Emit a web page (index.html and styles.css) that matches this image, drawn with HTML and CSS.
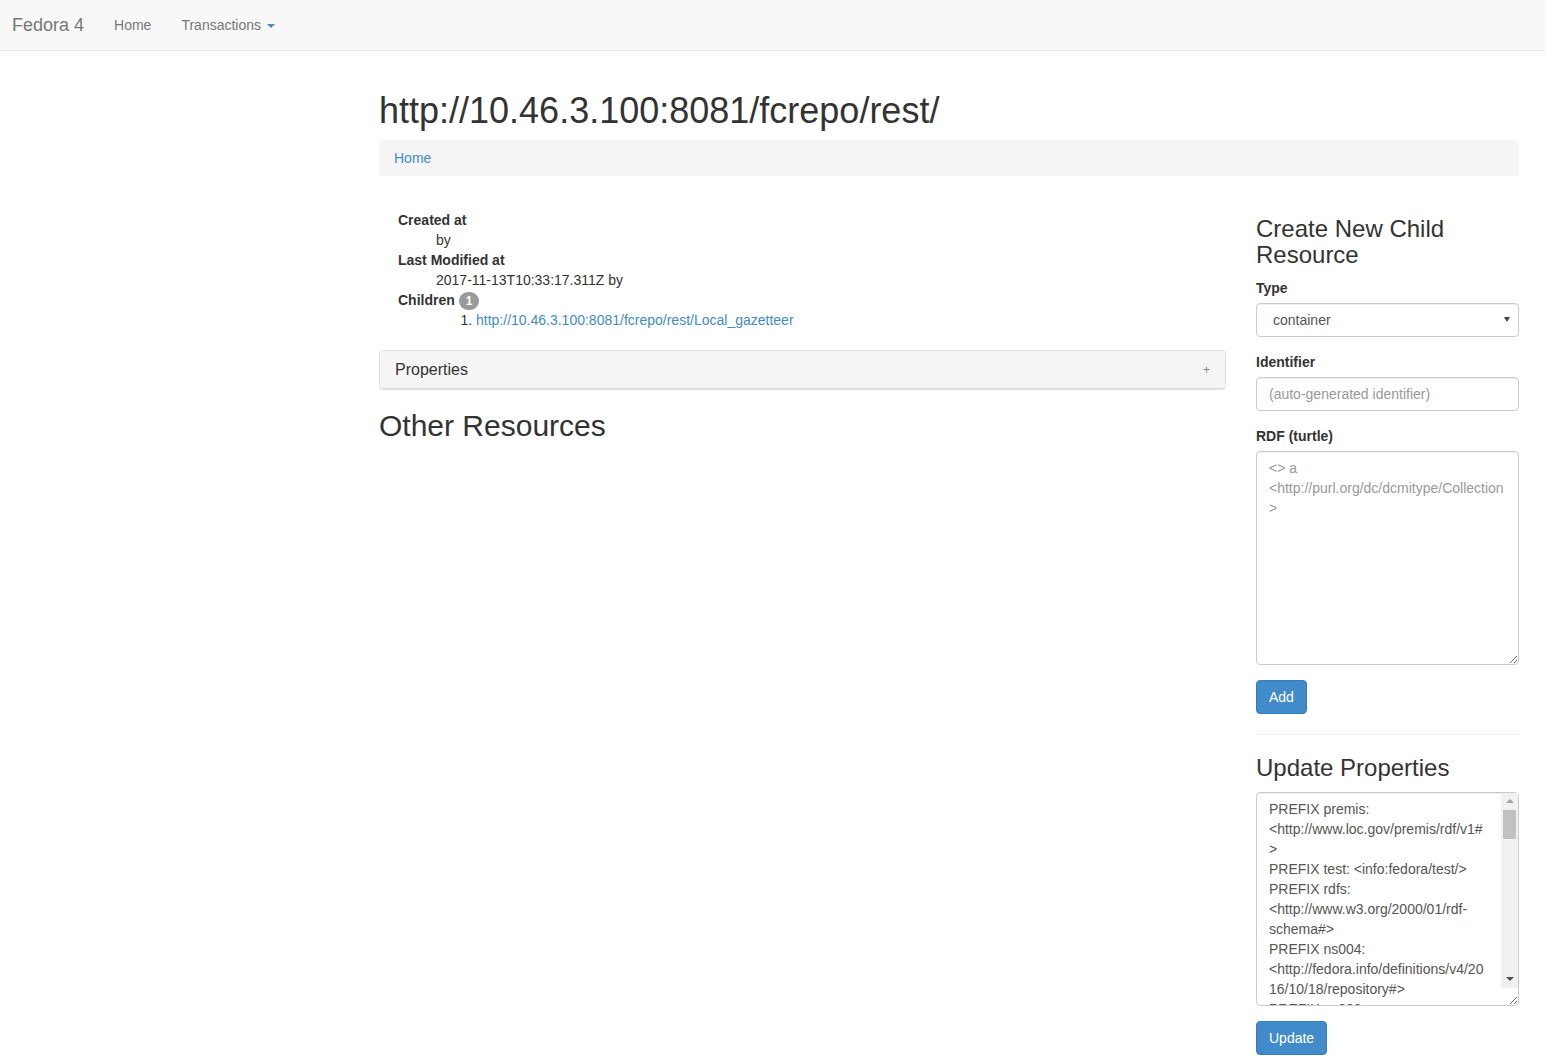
FILE: index.html
```html
<!DOCTYPE html>
<html lang="en">
<head>
<meta charset="utf-8">
<title>http://10.46.3.100:8081/fcrepo/rest/</title>
<link rel="stylesheet" href="styles.css">
</head>
<body>
<nav class="navbar">
  <a class="navbar-brand">Fedora 4</a>
  <ul class="nav">
    <li><a>Home</a></li>
    <li><a>Transactions <span class="caret"></span></a></li>
  </ul>
</nav>
<div class="container">
  <h1 class="page-title">http://10.46.3.100:8081/fcrepo/rest/</h1>
  <ol class="breadcrumb"><li><a>Home</a></li></ol>
  <div class="row">
    <div class="main">
      <dl class="meta">
        <dt>Created at</dt>
        <dd>by</dd>
        <dt>Last Modified at</dt>
        <dd>2017-11-13T10:33:17.311Z by</dd>
        <dt>Children <span class="badge">1</span></dt>
        <dd>
          <ol class="children">
            <li><a>http://10.46.3.100:8081/fcrepo/rest/Local_gazetteer</a></li>
          </ol>
        </dd>
      </dl>
      <div class="panel">
        <div class="panel-heading">
          <span class="panel-title">Properties</span>
          <span class="panel-toggle">+</span>
        </div>
      </div>
      <h2 class="section-title">Other Resources</h2>
    </div>
    <div class="sidebar">
      <form class="side-form">
        <h3 class="side-title">Create New Child Resource</h3>
        <div class="form-group">
          <label class="form-label">Type</label>
          <div class="select-wrap">
            <select class="form-control select"><option>container</option><option>binary</option></select>
            <span class="select-arrow"></span>
          </div>
        </div>
        <div class="form-group">
          <label class="form-label">Identifier</label>
          <input class="form-control" type="text" placeholder="(auto-generated identifier)">
        </div>
        <div class="form-group">
          <label class="form-label">RDF (turtle)</label>
          <textarea class="form-control textarea" rows="10" placeholder="&lt;&gt; a &lt;http://purl.org/dc/dcmitype/Collection&gt;"></textarea>
        </div>
        <button type="button" class="btn">Add</button>
      </form>
      <hr class="divider">
      <form class="side-form">
        <h3 class="side-title">Update Properties</h3>
        <div class="form-group">
          <div class="scroll-wrap">
            <textarea class="form-control textarea scroll" rows="10">PREFIX premis: &lt;http://www.loc.gov/premis/rdf/v1#&gt;
PREFIX test: &lt;info:fedora/test/&gt;
PREFIX rdfs: &lt;http://www.w3.org/2000/01/rdf-schema#&gt;
PREFIX ns004: &lt;http://fedora.info/definitions/v4/2016/10/18/repository#&gt;
PREFIX ns003: &lt;http://www.w3.org/ns/auth/acl#&gt;
PREFIX xsi: &lt;http://www.w3.org/2001/XMLSchema-instance&gt;
PREFIX xmlns: &lt;http://www.w3.org/2000/xmlns/&gt;
PREFIX rdf: &lt;http://www.w3.org/1999/02/22-rdf-syntax-ns#&gt;
PREFIX fedora: &lt;http://fedora.info/definitions/v4/repository#&gt;
PREFIX xml: &lt;http://www.w3.org/XML/1998/namespace&gt;
PREFIX ebucore: &lt;http://www.ebu.ch/metadata/ontologies/ebucore/ebucore#&gt;
PREFIX ldp: &lt;http://www.w3.org/ns/ldp#&gt;
PREFIX xs: &lt;http://www.w3.org/2001/XMLSchema&gt;
PREFIX fedoraconfig: &lt;http://fedora.info/definitions/v4/config#&gt;
PREFIX foaf: &lt;http://xmlns.com/foaf/0.1/&gt;
PREFIX dc: &lt;http://purl.org/dc/elements/1.1/&gt;

DELETE { }
INSERT { }
WHERE { }</textarea>
            <div class="fake-scrollbar" aria-hidden="true">
              <span class="sb-btn"><span class="sb-up"></span></span>
              <span class="sb-track"><span class="sb-thumb"></span></span>
              <span class="sb-btn"><span class="sb-down"></span></span>
            </div>
          </div>
        </div>
        <button type="button" class="btn">Update</button>
      </form>
    </div>
  </div>
</div>
</body>
</html>
```

FILE: styles.css
```css
* { box-sizing: border-box; }
html, body { margin: 0; padding: 0; }
body {
  font-family: "Liberation Sans", Arial, Helvetica, sans-serif;
  font-size: 14px;
  line-height: 1.42857143;
  color: #333;
  background: #fff;
}
a { color: #428bca; text-decoration: none; cursor: pointer; }

/* navbar */
.navbar {
  display: flex;
  align-items: flex-start;
  height: 51px;
  background: #f8f8f8;
  border-bottom: 1px solid #e7e7e7;
  margin-bottom: 20px;
}
.navbar-brand {
  display: block;
  height: 50px;
  padding: 15px 15px 15px 12px;
  font-size: 18px;
  line-height: 20px;
  color: #777;
}
.nav { display: flex; list-style: none; margin: 0; padding: 0; }
.nav a { display: block; padding: 15px; line-height: 20px; color: #777; }
.caret {
  display: inline-block;
  width: 0; height: 0;
  margin-left: 2px;
  vertical-align: middle;
  border-top: 4px solid #428bca;
  border-left: 4px solid transparent;
  border-right: 4px solid transparent;
}

/* page */
.container { width: 1140px; margin-left: 379px; display: flow-root; }
.page-title {
  font-size: 36px;
  font-weight: 500;
  line-height: 1.1;
  margin: 20px 0 9px;
  color: #333;
}
.breadcrumb {
  list-style: none;
  margin: 0 0 20px;
  padding: 8px 15px;
  background: #f5f5f5;
  border-radius: 4px;
}
.row { display: flex; gap: 30px; align-items: flex-start; }
.main { width: 847px; display: flow-root; }
.sidebar { width: 263px; display: flow-root; }

/* metadata */
.meta { margin: 14px 0 20px 19px; }
.meta dt { font-weight: bold; line-height: 20px; }
.meta dd { margin: 0 0 0 38px; line-height: 20px; }
.children { margin: 0 0 10px; padding-left: 40px; }
.badge {
  display: inline-block;
  min-width: 10px;
  padding: 3px 7px;
  font-size: 12px;
  font-weight: bold;
  line-height: 1;
  color: #fff;
  text-align: center;
  white-space: nowrap;
  vertical-align: middle;
  background: #999;
  border-radius: 10px;
}

/* panel */
.panel {
  margin-bottom: 20px;
  background: #fff;
  border: 1px solid #ddd;
  border-radius: 4px;
  box-shadow: 0 1px 1px rgba(0,0,0,.05), 0 2px 1px -1px rgba(0,0,0,.08);
}
.panel-heading {
  display: flex;
  justify-content: space-between;
  align-items: center;
  padding: 10px 15px;
  background: #f5f5f5;
  border-radius: 3px;
}
.panel-title { font-size: 16px; line-height: 1.1; color: #333; }
.panel-toggle { font-size: 12px; line-height: 1; color: #888; margin-right: 0; }

.section-title {
  font-size: 30px;
  font-weight: 500;
  line-height: 1.1;
  margin: 20px 0 10px;
  color: #333;
}

/* sidebar forms */
.side-form { margin: 0; }
.side-title {
  font-size: 24px;
  font-weight: 500;
  line-height: 1.1;
  margin: 20px 0 10px;
  color: #333;
}
.form-group { margin-bottom: 15px; }
.form-label {
  display: inline-block;
  max-width: 100%;
  margin-bottom: 5px;
  font-weight: bold;
}
.form-control {
  display: block;
  width: 100%;
  height: 34px;
  padding: 6px 12px;
  font-family: inherit;
  font-size: 14px;
  line-height: 1.42857143;
  color: #555;
  background: #fff;
  border: 1px solid #ccc;
  border-radius: 4px;
  box-shadow: inset 0 1px 1px rgba(0,0,0,.075);
  margin: 0;
}
.form-control::placeholder { color: #999; opacity: 1; }
.select-wrap { position: relative; }
.select {
  -webkit-appearance: none;
  appearance: none;
  padding-left: 16px;
}
.select-arrow {
  position: absolute;
  right: 9px;
  top: 14px;
  width: 0; height: 0;
  border-top: 5px solid #444;
  border-left: 3.5px solid transparent;
  border-right: 3.5px solid transparent;
  pointer-events: none;
}
.textarea { height: auto; resize: vertical; }

/* update textarea with classic scrollbar */
.scroll-wrap { position: relative; }
.scroll { padding-right: 29px; overflow: hidden; }
.fake-scrollbar {
  position: absolute;
  top: 1px;
  right: 1px;
  bottom: 18px;
  width: 17px;
  display: flex;
  flex-direction: column;
  background: #f1f1f1;
  pointer-events: none;
}
.sb-btn {
  flex: 0 0 17px;
  display: flex;
  align-items: center;
  justify-content: center;
}
.sb-track { flex: 1; display: block; padding: 0 2px; }
.sb-thumb { display: block; height: 29px; background: #c1c1c1; }
.sb-up {
  width: 0; height: 0;
  border-bottom: 4px solid #a3a3a3;
  border-left: 4px solid transparent;
  border-right: 4px solid transparent;
}
.sb-down {
  width: 0; height: 0;
  border-top: 4px solid #505050;
  border-left: 4px solid transparent;
  border-right: 4px solid transparent;
}

.divider { margin: 20px 0; border: 0; border-top: 1px solid #eee; height: 0; }

.btn {
  display: inline-block;
  padding: 6px 12px;
  margin: 0;
  font-family: inherit;
  font-size: 14px;
  font-weight: normal;
  line-height: 1.42857143;
  color: #fff;
  background: #428bca;
  border: 1px solid #357ebd;
  border-radius: 4px;
  cursor: pointer;
  vertical-align: middle;
}
```
